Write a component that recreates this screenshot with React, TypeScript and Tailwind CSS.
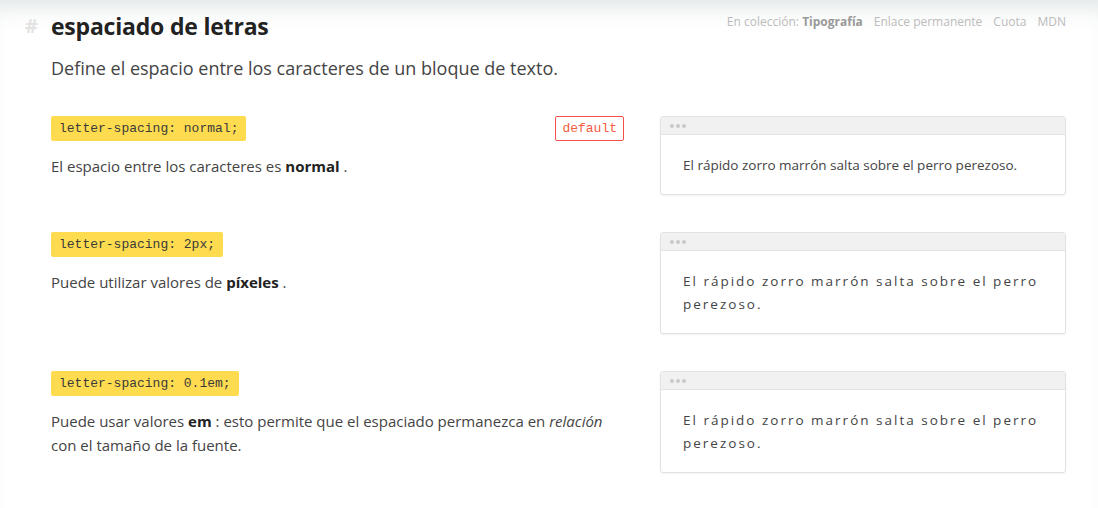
import React from "react";

const rows = [
  {
    code: "letter-spacing: normal;",
    isDefault: true,
    desc: (
      <>
        El espacio entre los caracteres es <strong className="font-bold text-[#222]">normal</strong> .
      </>
    ),
    tracking: "tracking-normal",
  },
  {
    code: "letter-spacing: 2px;",
    isDefault: false,
    desc: (
      <>
        Puede utilizar valores de <strong className="font-bold text-[#222]">píxeles</strong> .
      </>
    ),
    tracking: "tracking-[2px]",
  },
  {
    code: "letter-spacing: 0.1em;",
    isDefault: false,
    desc: (
      <>
        Puede usar valores <strong className="font-bold text-[#222]">em</strong> : esto permite que el espaciado
        permanezca en <em>relación</em> con el tamaño de la fuente.
      </>
    ),
    tracking: "tracking-[2px]",
  },
];

function Preview({ tracking }: { tracking: string }) {
  return (
    <div className="w-[406px] shrink-0 rounded-[3px] border border-[#e2e2e2] bg-white shadow-[0_1px_2px_rgba(0,0,0,0.06)]">
      {/* window bar */}
      <div className="flex h-[18px] items-center gap-[2px] border-b border-[#e3e3e3] bg-[#f1f1f1] px-[9px]">
        <span className="h-[4px] w-[4px] rounded-full bg-[#c9c9c9]" />
        <span className="h-[4px] w-[4px] rounded-full bg-[#c9c9c9]" />
        <span className="h-[4px] w-[4px] rounded-full bg-[#c9c9c9]" />
      </div>
      <p className={`px-[22px] pb-[17px] pt-[19px] text-[13.5px] leading-[23px] text-[#444] ${tracking}`}>
        El rápido zorro marrón salta sobre el perro perezoso.
      </p>
    </div>
  );
}

export default function App() {
  return (
    <div className="min-h-[508px] w-full bg-white font-['Open_Sans',sans-serif] text-[#444] shadow-[inset_0_22px_26px_-18px_rgba(20,60,60,0.16)]">
      {/* Header */}
      <div className="flex items-start justify-between pl-[25px] pr-[32px] pt-[10px]">
        <h2 className="flex items-center gap-[13px] leading-[32px]">
          <span className="text-[20px] font-bold text-[#e3e3e3]">#</span>
          <span className="text-[23px] font-bold tracking-[-0.2px] text-[#222]">espaciado de letras</span>
        </h2>
        <nav className="flex gap-[11px] pt-[3px] text-[12px] leading-[18px] text-[#bbbbbb]">
          <span>
            En colección: <b className="font-bold text-[#999]">Tipografía</b>
          </span>
          <span>Enlace permanente</span>
          <span>Cuota</span>
          <span>MDN</span>
        </nav>
      </div>
      <p className="mt-[12px] pl-[51px] text-[18px] leading-[28px] text-[#444]">
        Define el espacio entre los caracteres de un bloque de texto.
      </p>

      {/* Rows */}
      <div className="flex flex-col gap-[37px] pl-[51px] pr-[32px] pt-[34px]">
        {rows.map((r, i) => (
          <div key={i} className="flex items-start gap-[36px]">
            <div className="flex-1">
              <div className="flex items-start justify-between">
                <code className="flex h-[25px] items-center rounded-[2px] bg-[#ffdc4f] px-[8px] font-['Liberation_Mono',monospace] text-[13px] text-[#3a3a3a]">
                  {r.code}
                </code>
                {r.isDefault && (
                  <span className="flex h-[25px] items-center rounded-[2px] border border-[#f4504a] px-[6px] font-['Liberation_Mono',monospace] text-[13px] text-[#f45a3f]">
                    default
                  </span>
                )}
              </div>
              <p className="mt-[13px] text-[15px] leading-[24px] text-[#444]">{r.desc}</p>
            </div>
            <Preview tracking={r.tracking} />
          </div>
        ))}
      </div>
    </div>
  );
}
